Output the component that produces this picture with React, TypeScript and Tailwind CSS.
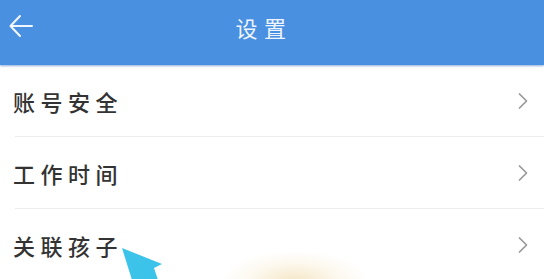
import React from "react";

const Chevron = () => (
  <svg width="14" height="22" viewBox="0 0 14 22" fill="none">
    <path d="M3.5 4 L10.5 11 L3.5 18" stroke="#999999" strokeWidth="1.7" strokeLinecap="round" strokeLinejoin="round" />
  </svg>
);

const Row = ({ label, divider }: { label: string; divider: boolean }) => (
  <div className="relative flex h-[72px] items-center justify-between pl-[13px] pr-[14px]">
    <span className="text-[22px] font-medium tracking-[0.25em] text-[#333333]">{label}</span>
    <Chevron />
    {divider && <div className="absolute bottom-0 left-[15px] right-0 h-px bg-[#ededed]" />}
  </div>
);

export default function App() {
  return (
    <div
      className="relative h-[279px] w-[544px] overflow-hidden bg-white"
      style={{ fontFamily: '"Noto Sans CJK SC", "Noto Sans", sans-serif' }}
    >
      <div className="relative flex h-[65px] items-center justify-center bg-[#4a90e0] shadow-[0_1px_2px_rgba(60,120,200,0.6)]">
        <svg className="absolute left-[8px] top-[13px]" width="26" height="26" viewBox="0 0 26 26" fill="none">
          <path d="M24 13 H3 M12 3 L2.5 13 L12 23" stroke="#f2f7ff" strokeWidth="2" strokeLinecap="round" strokeLinejoin="round" />
        </svg>
        <span className="-mt-[10px] pr-[16px] text-[22px] tracking-[0.3em] text-[#eef5ff]">设置</span>
      </div>
      <Row label="账号安全" divider />
      <Row label="工作时间" divider />
      <Row label="关联孩子" divider={false} />
      <div
        className="pointer-events-none absolute left-[225px] top-[252px] h-[60px] w-[140px] rounded-full"
        style={{ background: "radial-gradient(ellipse at center, rgba(235,205,140,0.5) 0%, rgba(245,225,180,0.22) 45%, rgba(255,255,255,0) 75%)" }}
      />
      <svg className="pointer-events-none absolute left-[118px] top-[244px]" width="50" height="36" viewBox="0 0 50 36">
        <path d="M4 4 L44 20 L36 24 L40 36 L14 36 Z" fill="#3cc3ea" />
      </svg>
    </div>
  );
}
